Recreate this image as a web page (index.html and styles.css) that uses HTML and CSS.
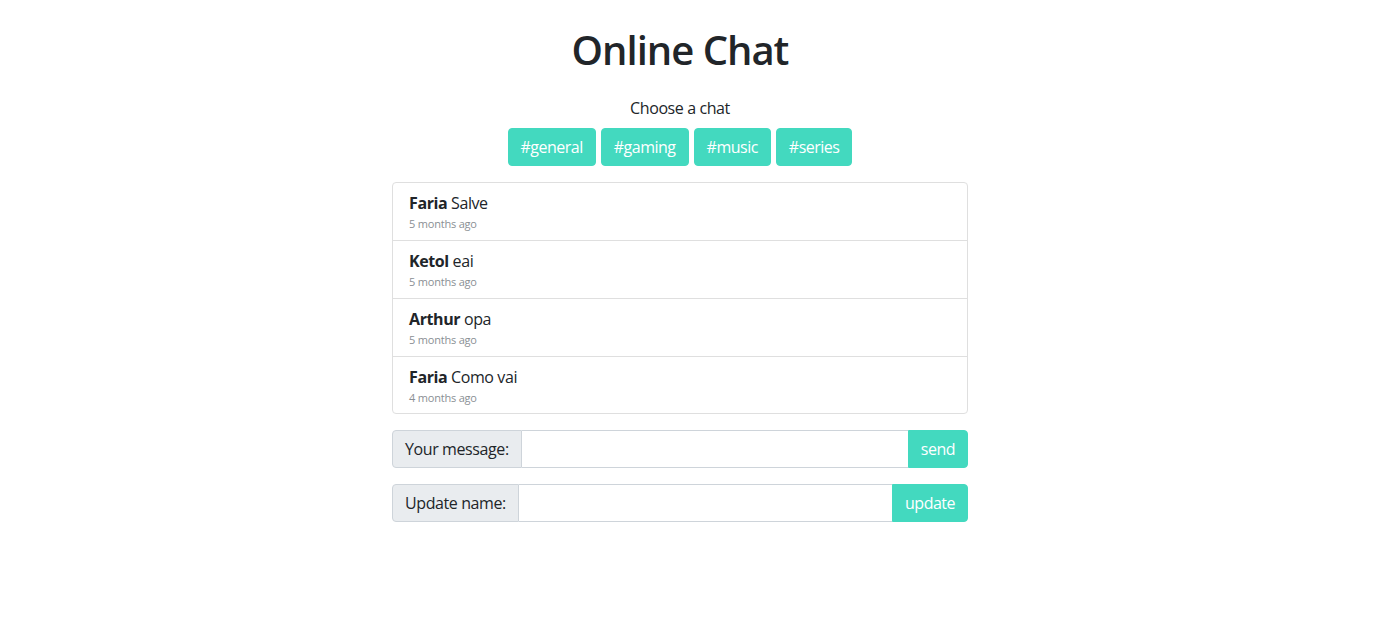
FILE: index.html
```html
<!DOCTYPE html>
<html lang="en">
<head>
<meta charset="utf-8">
<title>Online Chat</title>
<link rel="stylesheet" href="styles.css">
</head>
<body>
<div class="page">
  <main class="chat">
    <h1 class="title">Online Chat</h1>
    <p class="subtitle">Choose a chat</p>
    <div class="rooms">
      <button class="btn">#general</button>
      <button class="btn">#gaming</button>
      <button class="btn">#music</button>
      <button class="btn">#series</button>
    </div>
    <ul class="messages">
      <li class="message"><div><strong>Faria</strong> Salve</div><small class="time">5 months ago</small></li>
      <li class="message"><div><strong>Ketol</strong> eai</div><small class="time">5 months ago</small></li>
      <li class="message"><div><strong>Arthur</strong> opa</div><small class="time">5 months ago</small></li>
      <li class="message"><div><strong>Faria</strong> Como vai</div><small class="time">4 months ago</small></li>
    </ul>
    <form class="input-group">
      <span class="label">Your message:</span>
      <input class="field" type="text">
      <button class="btn btn-end" type="button">send</button>
    </form>
    <form class="input-group">
      <span class="label">Update name:</span>
      <input class="field" type="text">
      <button class="btn btn-end" type="button">update</button>
    </form>
  </main>
</div>
</body>
</html>
```
FILE: styles.css
```css
* { box-sizing: border-box; }
html, body { margin: 0; padding: 0; }
body {
  font-family: "Open Sans", "Noto Sans", sans-serif;
  font-size: 16px;
  line-height: 1.5;
  letter-spacing: -0.4px;
  color: #212529;
  background: #fff;
}
.page {
  width: 1360px;
  display: flex;
  justify-content: center;
  padding-top: 26px;
}
.chat {
  width: 576px;
  display: flex;
  flex-direction: column;
  align-items: stretch;
}
.title {
  margin: 0 0 22px;
  font-size: 40px;
  font-weight: 600;
  line-height: 1.2;
  letter-spacing: -1px;
  text-align: center;
}
.subtitle {
  margin: 0 0 8px;
  text-align: center;
}
.rooms {
  display: flex;
  justify-content: center;
  gap: 5px;
  margin-bottom: 16px;
}
.btn {
  font-family: inherit;
  font-size: 16px;
  line-height: 24px;
  letter-spacing: -0.5px;
  color: #fff;
  background: #43d9bf;
  border: 1px solid #43d9bf;
  border-radius: 4px;
  padding: 6px 12px;
  cursor: pointer;
}
.messages {
  list-style: none;
  margin: 0 0 16px;
  padding: 0;
  border: 1px solid #dfdfdf;
  border-radius: 4px;
}
.message {
  padding: 8px 16px;
  border-bottom: 1px solid #dfdfdf;
}
.message:last-child { border-bottom: 0; padding-bottom: 7px; }
.message strong { font-weight: 700; }
.time {
  display: block;
  font-size: 11px;
  line-height: 17px;
  letter-spacing: -0.2px;
  color: #8a8f94;
}
.input-group {
  display: flex;
  height: 38px;
  margin: 0 0 16px;
}
.label {
  display: flex;
  align-items: center;
  padding: 6px 12px;
  background: #e9ecef;
  border: 1px solid #ced4da;
  border-radius: 4px 0 0 4px;
  white-space: nowrap;
}
.field {
  flex: 1;
  min-width: 0;
  border: 1px solid #ced4da;
  border-left: 0;
  border-right: 0;
  font-family: inherit;
  font-size: 16px;
  padding: 6px 12px;
  outline: none;
}
.btn-end {
  border-radius: 0 4px 4px 0;
}
```
